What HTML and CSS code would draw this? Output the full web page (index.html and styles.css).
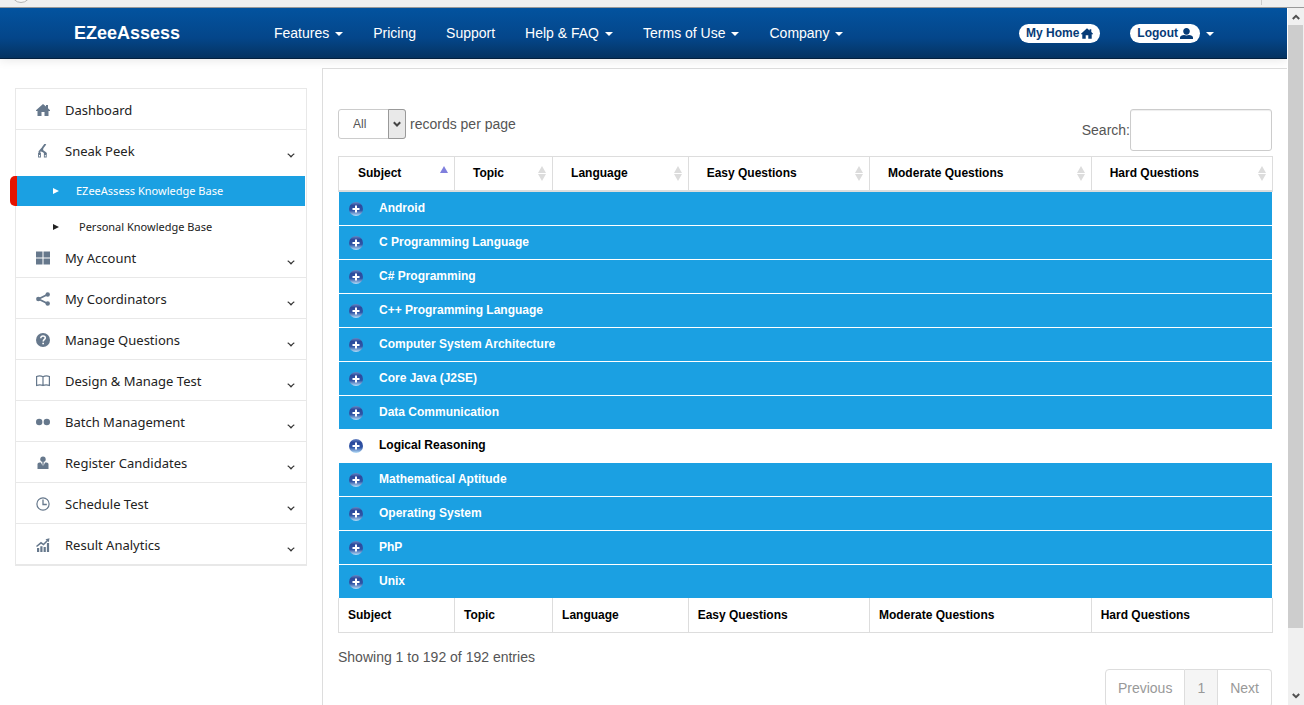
FILE: index.html
```html
<!DOCTYPE html>
<html lang="en">
<head>
<meta charset="utf-8">
<meta name="viewport" content="width=device-width, initial-scale=1">
<title>EZeeAssess Knowledge Base</title>
<link rel="stylesheet" href="styles.css">
</head>
<body>
<svg class="defs" aria-hidden="true">
  <defs>
    <linearGradient id="orb" x1="0" y1="0" x2="0" y2="1">
      <stop offset="0" stop-color="#6a86c4"/>
      <stop offset=".25" stop-color="#2c4a9c"/>
      <stop offset=".6" stop-color="#2f55a6"/>
      <stop offset="1" stop-color="#b9e0fa"/>
    </linearGradient>
    <symbol id="plus" viewBox="0 0 14 14">
      <circle cx="7" cy="7" r="7" fill="url(#orb)"/>
      <path d="M7 3.500v7M3.500 7h7" stroke="#fff" stroke-width="2" fill="none"/>
    </symbol>
    <symbol id="sort" viewBox="0 0 8 15">
      <path d="M4 0l4 7H0zM0 8h8L4 15z" fill="#dcdcdc"/>
    </symbol>
    <symbol id="home" viewBox="0 0 14 12">
      <path d="M7 0l3 2.600V1h2v3.300L14 6.200V7h-1.500v5H8.500V8h-3v4h-4V7H0v-.8z" fill="currentColor"/>
    </symbol>
    <symbol id="down" viewBox="0 0 8 5">
      <path d="M.7.8Q2 1.500 4 3.800Q6 1.500 7.300.8" fill="none" stroke="#333" stroke-width="1.300"/>
    </symbol>
  </defs>
</svg>
<div class="chrome"><svg width="22" height="8" viewBox="0 0 22 8" aria-hidden="true"><circle cx="11" cy="-7" r="9.500" fill="#f7f7f7" stroke="#b5b5b5"/></svg><span class="chrome-sep"></span></div>
<div class="window">
  <div class="page">
    <header class="navbar">
      <a class="brand" href="#">EZeeAssess</a>
      <nav class="nav">
        <a href="#">Features<i class="caret"></i></a>
        <a href="#">Pricing</a>
        <a href="#">Support</a>
        <a href="#">Help &amp; FAQ<i class="caret"></i></a>
        <a href="#">Terms of Use<i class="caret"></i></a>
        <a href="#">Company<i class="caret"></i></a>
      </nav>
      <div class="nav account">
        <a href="#"><span class="pill">My Home <svg width="12" height="11"><use href="#home"/></svg></span></a>
        <a href="#"><span class="pill">Logout <svg width="13" height="11" viewBox="0 0 13 11"><path d="M6.500 0C8.500 0 9.800 1.300 9.800 3.200S8.500 6.800 6.500 6.800 3.200 5.100 3.200 3.200 4.500 0 6.500 0zM0 11V9.500C0 8 2 7.300 4 7L6.500 7.600 9 7C11 7.300 13 8 13 9.500V11z" fill="currentColor"/></svg></span><i class="caret"></i></a>
      </div>
    </header>
    <div class="layout">
      <aside class="sidebar">
        <ul class="menu">
          <li><a href="#"><svg class="icon" viewBox="0 0 14 12"><use href="#home"/></svg>Dashboard</a></li>
          <li class="open"><a href="#"><svg class="icon" viewBox="0 0 14 14"><path d="M9.500 0L6.500 4 3.500 7.500V10M6.500 4L6 6.500 9.500 9v1.500M6.300 6v2" fill="none" stroke="currentColor" stroke-width="1.900"/><path d="M3.500 9v4.500M9.300 9v4.500" fill="none" stroke="currentColor" stroke-width="2.800"/><path d="M3.500 11v1.500M9.300 11v1.500" stroke="#fff" stroke-width="1"/></svg>Sneak Peek<svg class="chevron"><use href="#down"/></svg></a>
            <ul class="submenu">
              <li class="active"><a href="#"><i class="arrow"></i>EZeeAssess Knowledge Base</a></li>
              <li><a href="#"><i class="arrow"></i>Personal Knowledge Base</a></li>
            </ul>
          </li>
          <li><a href="#"><svg class="icon" viewBox="0 0 14 14"><path d="M0 .5h6.500v6H0zM7.500.5H14v6H7.500zM0 7.500h6.500v6H0zM7.500 7.500H14v6H7.500z" fill="currentColor"/></svg>My Account<svg class="chevron"><use href="#down"/></svg></a></li>
          <li><a href="#"><svg class="icon" viewBox="0 0 14 14"><path d="M11.500 2.500L2.500 7l9 4.500" fill="none" stroke="currentColor" stroke-width="1.800"/><g fill="currentColor"><circle cx="11.700" cy="2.500" r="2.200"/><circle cx="2.300" cy="7" r="2.200"/><circle cx="11.700" cy="11.500" r="2.200"/></g></svg>My Coordinators<svg class="chevron"><use href="#down"/></svg></a></li>
          <li><a href="#"><svg class="icon" viewBox="0 0 14 14"><circle cx="7" cy="7" r="7" fill="currentColor"/><path d="M4.800 5.200C4.800 3.700 5.700 3 7 3s2.300.8 2.300 2S7.200 6.600 7.200 8.500" fill="none" stroke="#fff" stroke-width="1.500"/><path d="M6.300 9.700h1.700v1.600H6.300z" fill="#fff"/></svg>Manage Questions<svg class="chevron"><use href="#down"/></svg></a></li>
          <li><a href="#"><svg class="icon" viewBox="0 0 14 14"><path d="M.6 11.500V2.500Q4 1 7 2.800 10 1 13.400 2.500v9Q10 10.300 7 11.500 4 10.300.6 11.500zM7 2.800v8.500" fill="none" stroke="currentColor" stroke-width="1.200"/></svg>Design &amp; Manage Test<svg class="chevron"><use href="#down"/></svg></a></li>
          <li><a href="#"><svg class="icon" viewBox="0 0 14 14"><circle cx="3.200" cy="7" r="3.200" fill="currentColor"/><circle cx="10.800" cy="7" r="3.200" fill="currentColor"/></svg>Batch Management<svg class="chevron"><use href="#down"/></svg></a></li>
          <li><a href="#"><svg class="icon" viewBox="0 0 14 14"><circle cx="7" cy="3.200" r="2.700" fill="currentColor"/><path d="M1.500 13V8Q1.500 6.500 3.500 6.500h1.500L6.500 10 6.300 6h1.400L7.500 10 9 6.500h1.500q2 0 2 1.500v5z" fill="currentColor"/></svg>Register Candidates<svg class="chevron"><use href="#down"/></svg></a></li>
          <li><a href="#"><svg class="icon" viewBox="0 0 14 14"><circle cx="7" cy="7" r="6.100" fill="none" stroke="currentColor" stroke-width="1.200"/><path d="M7 2.500V7.500h3.800" fill="none" stroke="currentColor" stroke-width="1.300"/></svg>Schedule Test<svg class="chevron"><use href="#down"/></svg></a></li>
          <li><a href="#"><svg class="icon" viewBox="0 0 14 14"><path d="M1 14v-4h2.200v4zM4.300 14V8.200h2.200V14zM7.600 14V9h2.200v5zM10.900 14V5h2.200v9z" fill="currentColor"/><path d="M.5 8.500L5 4.800l2.500 1.800L12 2" fill="none" stroke="currentColor" stroke-width="1.500"/><path d="M9.500 1.200L13.500.3l-.7 4z" fill="currentColor"/></svg>Result Analytics<svg class="chevron"><use href="#down"/></svg></a></li>
        </ul>
      </aside>
      <main class="content">
        <div class="controls">
          <label class="length"><span class="select"><select><option>All</option></select><span class="select-button"><svg width="8" height="7" viewBox="0 0 8 7" aria-hidden="true"><path d="M.8 1.300L4 4.500l3.200-3.200" fill="none" stroke="#444" stroke-width="2"/></svg></span></span>records per page</label>
          <label class="search">Search:<input type="search"></label>
        </div>
        <table class="grid">
          <colgroup><col class="w-subject"><col class="w-topic"><col class="w-language"><col class="w-easy"><col class="w-moderate"><col class="w-hard"></colgroup>
          <thead>
            <tr>
              <th><div>Subject<svg class="sort" viewBox="0 0 8 15"><path d="M4 0l4 7H0z" fill="#7f7fdd"/></svg></div></th>
              <th><div>Topic<svg class="sort"><use href="#sort"/></svg></div></th>
              <th><div>Language<svg class="sort"><use href="#sort"/></svg></div></th>
              <th><div>Easy Questions<svg class="sort"><use href="#sort"/></svg></div></th>
              <th><div>Moderate Questions<svg class="sort"><use href="#sort"/></svg></div></th>
              <th><div>Hard Questions<svg class="sort"><use href="#sort"/></svg></div></th>
            </tr>
          </thead>
          <tbody>
            <tr><td colspan="6"><div><svg class="plus"><use href="#plus"/></svg>Android</div></td></tr>
            <tr><td colspan="6"><div><svg class="plus"><use href="#plus"/></svg>C Programming Language</div></td></tr>
            <tr><td colspan="6"><div><svg class="plus"><use href="#plus"/></svg>C# Programming</div></td></tr>
            <tr><td colspan="6"><div><svg class="plus"><use href="#plus"/></svg>C++ Programming Language</div></td></tr>
            <tr><td colspan="6"><div><svg class="plus"><use href="#plus"/></svg>Computer System Architecture</div></td></tr>
            <tr><td colspan="6"><div><svg class="plus"><use href="#plus"/></svg>Core Java (J2SE)</div></td></tr>
            <tr><td colspan="6"><div><svg class="plus"><use href="#plus"/></svg>Data Communication</div></td></tr>
            <tr class="hovered"><td colspan="6"><div><svg class="plus"><use href="#plus"/></svg>Logical Reasoning</div></td></tr>
            <tr><td colspan="6"><div><svg class="plus"><use href="#plus"/></svg>Mathematical Aptitude</div></td></tr>
            <tr><td colspan="6"><div><svg class="plus"><use href="#plus"/></svg>Operating System</div></td></tr>
            <tr><td colspan="6"><div><svg class="plus"><use href="#plus"/></svg>PhP</div></td></tr>
            <tr><td colspan="6"><div><svg class="plus"><use href="#plus"/></svg>Unix</div></td></tr>
          </tbody>
          <tfoot>
            <tr><th>Subject</th><th>Topic</th><th>Language</th><th>Easy Questions</th><th>Moderate Questions</th><th>Hard Questions</th></tr>
          </tfoot>
        </table>
        <p class="info">Showing 1 to 192 of 192 entries</p>
        <div class="pagination"><button type="button">Previous</button><button type="button" class="current">1</button><button type="button">Next</button></div>
      </main>
    </div>
  </div>
  <div class="scrollbar" aria-hidden="true">
    <svg width="8" height="6" viewBox="0 0 8 6"><path d="M.8 5L4 1.800 7.200 5" fill="none" stroke="#505050" stroke-width="2"/></svg>
    <div class="track"><div class="thumb"></div></div>
    <svg width="8" height="6" viewBox="0 0 8 6"><path d="M.8 1L4 4.200 7.200 1" fill="none" stroke="#505050" stroke-width="2"/></svg>
  </div>
</div>
</body>
</html>
```
FILE: styles.css
```css
* { box-sizing: border-box; }

body {
  margin: 0;
  height: 100vh;
  display: flex;
  flex-direction: column;
  font: 14px/20px "Liberation Sans", Arial, sans-serif;
  color: #555;
  background: #fff;
}

a { color: inherit; text-decoration: none; }
ul { list-style: none; margin: 0; padding: 0; }
svg { flex: none; }
.defs { position: absolute; width: 0; height: 0; }

.chrome {
  flex: none;
  display: flex;
  justify-content: space-between;
  height: 8px;
  padding: 0 42px 0 10px;
  background: #f0f0f0;
  border-bottom: 1px solid #999;
}
.chrome-sep { width: 1px; height: 5px; background: #ccc; }

.window { flex: 1; min-height: 0; display: flex; }
.page { flex: 1; min-width: 0; overflow-y: auto; scrollbar-width: none; }

.scrollbar {
  flex: none;
  width: 17px;
  display: flex;
  flex-direction: column;
  align-items: center;
  gap: 5px;
  padding: 6px 0;
  background: #f0f0f0;
  border-left: 1px solid #fff;
}
.track { flex: 1; align-self: stretch; padding-right: 1px; }
.thumb { height: 91%; background: #cdcdcd; }

/* Top navigation */
.navbar {
  position: relative;
  display: flex;
  align-items: center;
  height: 51px;
  padding: 0 73px 0 74px;
  color: #fff;
  background: linear-gradient(#03539f, #04468a 60%, #053361);
  border-bottom: 1px solid #04213f;
  box-shadow: 0 1px 10px rgba(0, 0, 0, .1);
}
.brand { flex: 0 0 200px; font-size: 18px; font-weight: bold; }
.nav { display: flex; align-items: center; gap: 30px; white-space: nowrap; }
.nav a { display: flex; align-items: center; }
.account { margin-left: auto; }
.caret {
  margin: 2px 0 0 6px;
  border: 4px solid transparent;
  border-top-color: #fff;
  border-bottom: 0;
}
.pill {
  display: flex;
  align-items: center;
  gap: 2px;
  padding: 0 7px;
  border-radius: 10px;
  background: #fff;
  color: #063b77;
  font-size: 12px;
  font-weight: bold;
  line-height: 19px;
}

.layout { display: flex; align-items: stretch; padding-top: 9px; }

/* Sidebar */
.sidebar {
  flex: 0 0 322px;
  padding: 20px 15px 0;
  color: #222;
  font-family: "Noto Sans", sans-serif;
}
.menu { border: 1px solid #e8e8e8; }
.menu > li > a {
  display: flex;
  align-items: center;
  height: 41px;
  padding: 2px 11px 0 20px;
  border-bottom: 1px solid #e8e8e8;
  font-size: 13px;
}
.menu > .open > a { border-bottom-color: transparent; }
.icon { width: 14px; height: 14px; margin-right: 15px; color: #66788c; }
.chevron { width: 8px; height: 5px; margin: 9px 0 0 auto; }
.submenu {
  display: flex;
  flex-direction: column;
  gap: 6px;
  padding: 5px 1px 0;
  font-size: 11px;
}
.submenu a { display: flex; align-items: center; gap: 20px; padding: 5px 36px 0; }
.submenu .active { position: relative; background: #1ba0e2; color: #fff; }
.submenu .active a { gap: 17px; padding-bottom: 5px; }
.submenu .active::before {
  content: "";
  position: absolute;
  top: 0;
  bottom: 0;
  left: -7px;
  width: 7px;
  border-radius: 5px 0 0 5px;
  background: #e51400;
}
.arrow { border: 3px solid transparent; border-left: 6px solid currentColor; border-right: 0; }

/* Content */
.content {
  flex: 1;
  min-width: 0;
  padding: 40px 14px 0 15px;
  border: solid #ddd;
  border-width: 1px 0 0 1px;
}
.controls { display: flex; justify-content: space-between; align-items: flex-start; margin-bottom: 5px; }
.length { display: flex; align-items: center; gap: 4px; line-height: 18px; }
.select { display: inline-grid; grid-template-columns: 50px 18px; height: 30px; }
select {
  grid-area: 1 / 1 / 2 / 3;
  appearance: none;
  padding: 0 14px;
  border: 1px solid #ccc;
  border-radius: 3px;
  background: #fff;
  color: #555;
  font: 12px "Liberation Sans", Arial, sans-serif;
}
.select-button {
  grid-area: 1 / 2;
  display: grid;
  place-items: center;
  border: 1px solid #999;
  border-radius: 0 3px 3px 0;
  background: #e9e9e9;
  pointer-events: none;
}
.search { display: flex; align-items: center; padding-right: 1px; }
.search input {
  width: 142px;
  height: 42px;
  padding: 4px 6px;
  border: 1px solid #ccc;
  border-radius: 3px;
  font: inherit;
  box-shadow: inset 0 1px 1px rgba(0, 0, 0, .07);
}

.grid {
  width: 100%;
  table-layout: fixed;
  border-spacing: 0;
  color: #000;
  font-size: 12px;
  font-weight: bold;
}
.w-subject { width: 12.4%; }
.w-topic { width: 10.5%; }
.w-language { width: 14.5%; }
.w-easy { width: 19.4%; }
.w-moderate { width: 23.7%; }
.w-hard { width: 19.5%; }
.grid th {
  height: 35px;
  padding: 0 6px 0 9px;
  border: solid #ddd;
  border-width: 0 0 1px 1px;
  text-align: left;
}
.grid th:last-child { border-right-width: 1px; }
.grid thead th { height: 36px; padding: 0 6px 2px 18px; border-top-width: 1px; border-bottom-width: 2px; }
.grid thead th:first-child { padding-left: 19px; }
.grid thead div { display: flex; align-items: center; justify-content: space-between; }
.sort { width: 8px; height: 15px; margin-top: 2px; }
.grid td {
  height: 34px;
  padding: 0 10px;
  border: solid #fff;
  border-width: 0 1px 1px;
  background: #1ba0e2;
  color: #fff;
}
.grid td div { display: flex; align-items: center; gap: 16px; line-height: 18px; padding-bottom: 2px; }
.grid .hovered td { height: 33px; background: #fff; color: #000; }
.grid tbody tr:last-child td { height: 33px; border-bottom: 0; }
.plus { width: 14px; height: 14px; margin-top: 2px; }

.info { margin: 14px 0 2px; }
.pagination { display: flex; justify-content: flex-end; padding: 0 1px 20px 0; }
.pagination button {
  padding: 8px 12px;
  border: 1px solid #ddd;
  border-left-width: 0;
  background: #fff;
  color: #999;
  font: inherit;
}
.pagination button:first-child { border-left-width: 1px; border-radius: 4px 0 0 4px; }
.pagination button:last-child { border-radius: 0 4px 4px 0; }
.pagination .current { background: #f5f5f5; }
```
